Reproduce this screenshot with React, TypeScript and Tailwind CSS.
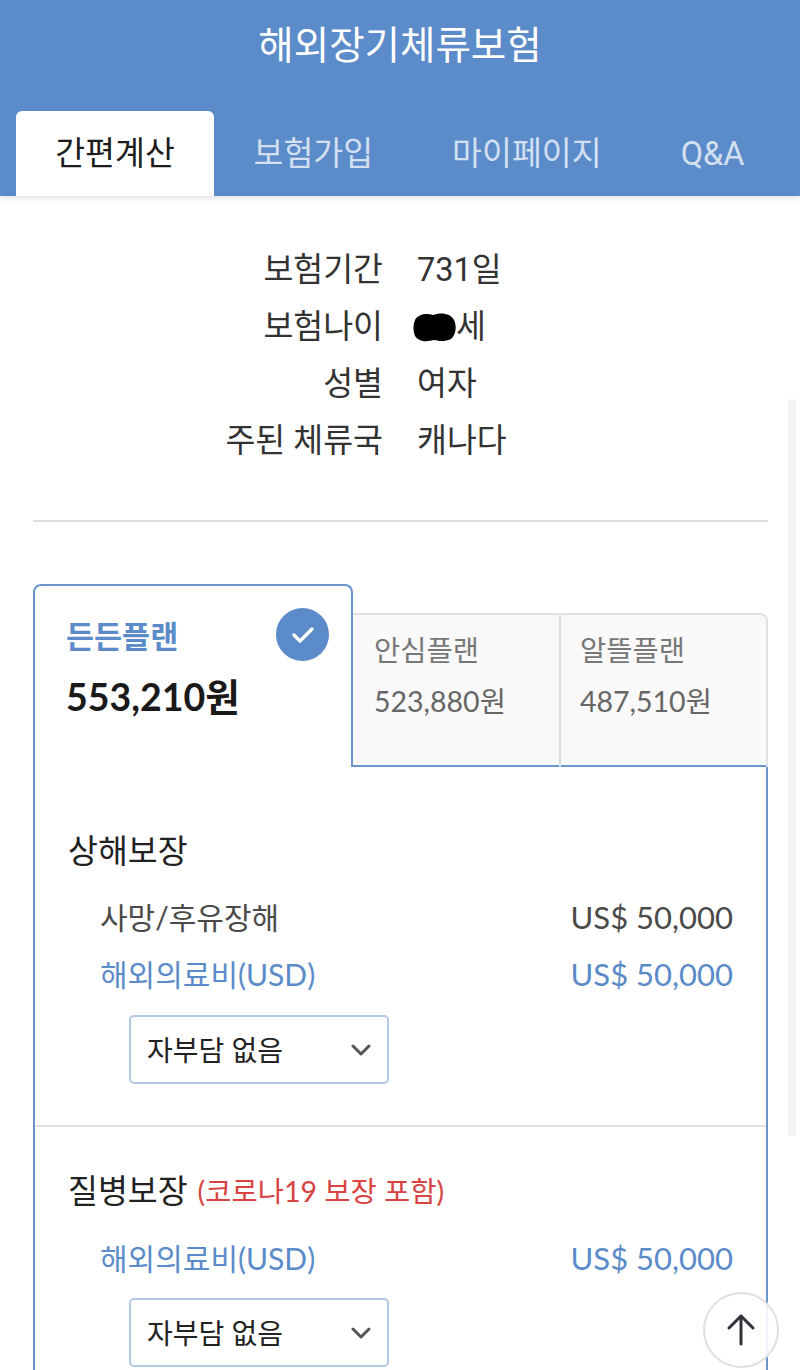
const BLUE = "text-[#5b8bc9]";

const INFO = [
  { label: "보험기간", value: "731일" },
  { label: "보험나이", value: "세", masked: true },
  { label: "성별", value: "여자" },
  { label: "주된 체류국", value: "캐나다" },
];

function Chevron() {
  return (
    <svg width="20" height="12" viewBox="0 0 20 12" fill="none" stroke="#555555" strokeWidth="3" strokeLinecap="round" strokeLinejoin="round">
      <polyline points="2 2 10 10 18 2" />
    </svg>
  );
}

function DeductibleSelect() {
  return (
    <div className="ml-[94px] mt-[12px] flex h-[69px] w-[260px] items-center justify-between rounded-[5px] border-2 border-[#b3c8e4] bg-white pl-[16px] pr-[16px] text-[28px] text-[#222222]">
      <span>자부담 없음</span>
      <Chevron />
    </div>
  );
}

function CoverageRow({ name, amount, accent }: { name: string; amount: string; accent?: boolean }) {
  return (
    <div className={`flex h-[57px] items-center justify-between pl-[65px] pr-[33px] text-[30px] ${accent ? BLUE : "text-[#4a4a4a]"}`}>
      <span>{name}</span>
      <span className="text-[31px]">{amount}</span>
    </div>
  );
}

export default function App() {
  return (
    <div className="relative h-[1370px] w-[800px] overflow-hidden bg-white font-['Lato','Noto_Sans_CJK_KR',sans-serif]">
      {/* Header with tabs */}
      <header className="flex h-[196px] flex-col bg-[#5b8bc9] font-['Roboto','Noto_Sans_CJK_KR',sans-serif] shadow-[0_2px_6px_rgba(0,0,0,0.12)]">
        <h1 className="flex h-[92px] items-center justify-center text-[38.5px] font-normal text-white">해외장기체류보험</h1>
        <nav className="mt-[19px] flex flex-1 pl-4 text-[32.5px] text-[#d3e0f1]">
          <div className="flex w-[198px] items-center justify-center rounded-t-[6px] bg-white pt-px text-[#1c1c1c]">간편계산</div>
          <div className="flex items-center px-[39.5px] pt-px">보험가입</div>
          <div className="flex items-center px-[39.5px] pt-px">마이페이지</div>
          <div className="flex items-center px-[39.5px] pt-px">Q&amp;A</div>
        </nav>
      </header>

      {/* Summary */}
      <section className="mt-[46px] font-['Roboto','Noto_Sans_CJK_KR',sans-serif] text-[32.5px] text-[#333333]">
        {INFO.map((row) => (
          <div key={row.label} className="flex h-[57px] items-center">
            <span className="w-[383px] text-right">{row.label}</span>
            <span className="ml-[34px] flex items-center">
              {row.masked && (
                <svg className="-ml-1" width="43" height="29" viewBox="0 0 43 29">
                  <path d="M2 7 C5 1 14 0 20 2 C27 -1 38 0 41 7 C44 13 43 22 38 26 C31 29 27 28 21 27 C14 29 6 29 2 23 C0 18 0 12 2 7 Z" fill="#000000" />
                </svg>
              )}
              {row.value}
            </span>
          </div>
        ))}
      </section>

      <hr className="ml-[33px] mt-[50px] w-[735px] border-t-2 border-[#dddddd]" />

      {/* Plan tabs */}
      <section className="ml-[33px] mt-[62px] w-[735px]">
        <div className="flex items-end">
          <div className="relative h-[183px] w-[320px] rounded-t-[8px] border-2 border-b-0 border-[#6b96cc] bg-white pl-[31px] pt-[28px]">
            <div className={`text-[30.5px] font-bold leading-[44px] ${BLUE}`}>든든플랜</div>
            <div className="mt-[17px] text-[37.5px] font-bold leading-[44px] text-[#1a1a1a]">553,210원</div>
            <div className="absolute right-[22px] top-[22px] flex h-[53px] w-[53px] items-center justify-center rounded-full bg-[#5b8bc9]">
              <svg width="24" height="20" viewBox="0 0 24 20" fill="none" stroke="#ffffff" strokeWidth="3.4" strokeLinecap="round" strokeLinejoin="round">
                <polyline points="3 10 9 16 21 4" />
              </svg>
            </div>
          </div>
          <div className="flex h-[154px] flex-1 rounded-tr-[8px] border-t-2 border-r-2 border-[#e2e2e2] bg-[#f9f9f9] text-[28.5px] text-[#666666] shadow-[inset_0_-2px_0_#6b96cc]">
            <div className="w-[208px] border-r-2 border-[#dedede] pl-[21px] pt-[13px]">
              <div className="leading-[44px] text-[#777777]">안심플랜</div>
              <div className="mt-[7px] leading-[44px]">523,880원</div>
            </div>
            <div className="flex-1 pl-[19px] pt-[13px]">
              <div className="leading-[44px] text-[#777777]">알뜰플랜</div>
              <div className="mt-[7px] leading-[44px]">487,510원</div>
            </div>
          </div>
        </div>

        {/* Coverage panel */}
        <div className="border-x-2 border-[#6b96cc] bg-white">
          <div className="border-b-2 border-[#e4e4e4] pb-[41px] pt-[56px]">
            <h2 className="mb-[10px] pl-[33px] text-[32.5px] font-normal leading-[56px] text-[#222222]">상해보장</h2>
            <CoverageRow name="사망/후유장해" amount="US$ 50,000" />
            <CoverageRow name="해외의료비(USD)" amount="US$ 50,000" accent />
            <DeductibleSelect />
          </div>
          <div className="pb-10 pt-[36px]">
            <h2 className="flex items-center pl-[33px] text-[32.5px] font-normal leading-[56px] text-[#222222]">
              질병보장
              <span className="ml-[10px] text-[28.5px] text-[#d84444]">(코로나19 보장 포함)</span>
            </h2>
            <div className="mt-[11px] -mb-px">
              <CoverageRow name="해외의료비(USD)" amount="US$ 50,000" accent />
            </div>
            <DeductibleSelect />
          </div>
        </div>
      </section>

      {/* Overlay scrollbar */}
      <div className="absolute right-[4px] top-[399px] h-[737px] w-[8px] rounded-full bg-[#f2f2f2]" />

      {/* Back to top */}
      <button className="absolute left-[703px] top-[1292px] flex h-[76px] w-[76px] items-center justify-center rounded-full border-2 border-[#e0e0e0] bg-white/90">
        <svg width="28" height="32" viewBox="0 0 28 32" fill="none" stroke="#2f3338" strokeWidth="3" strokeLinecap="round" strokeLinejoin="round">
          <line x1="14" y1="2" x2="14" y2="30" />
          <polyline points="2 14 14 2 26 14" />
        </svg>
      </button>
    </div>
  );
}
